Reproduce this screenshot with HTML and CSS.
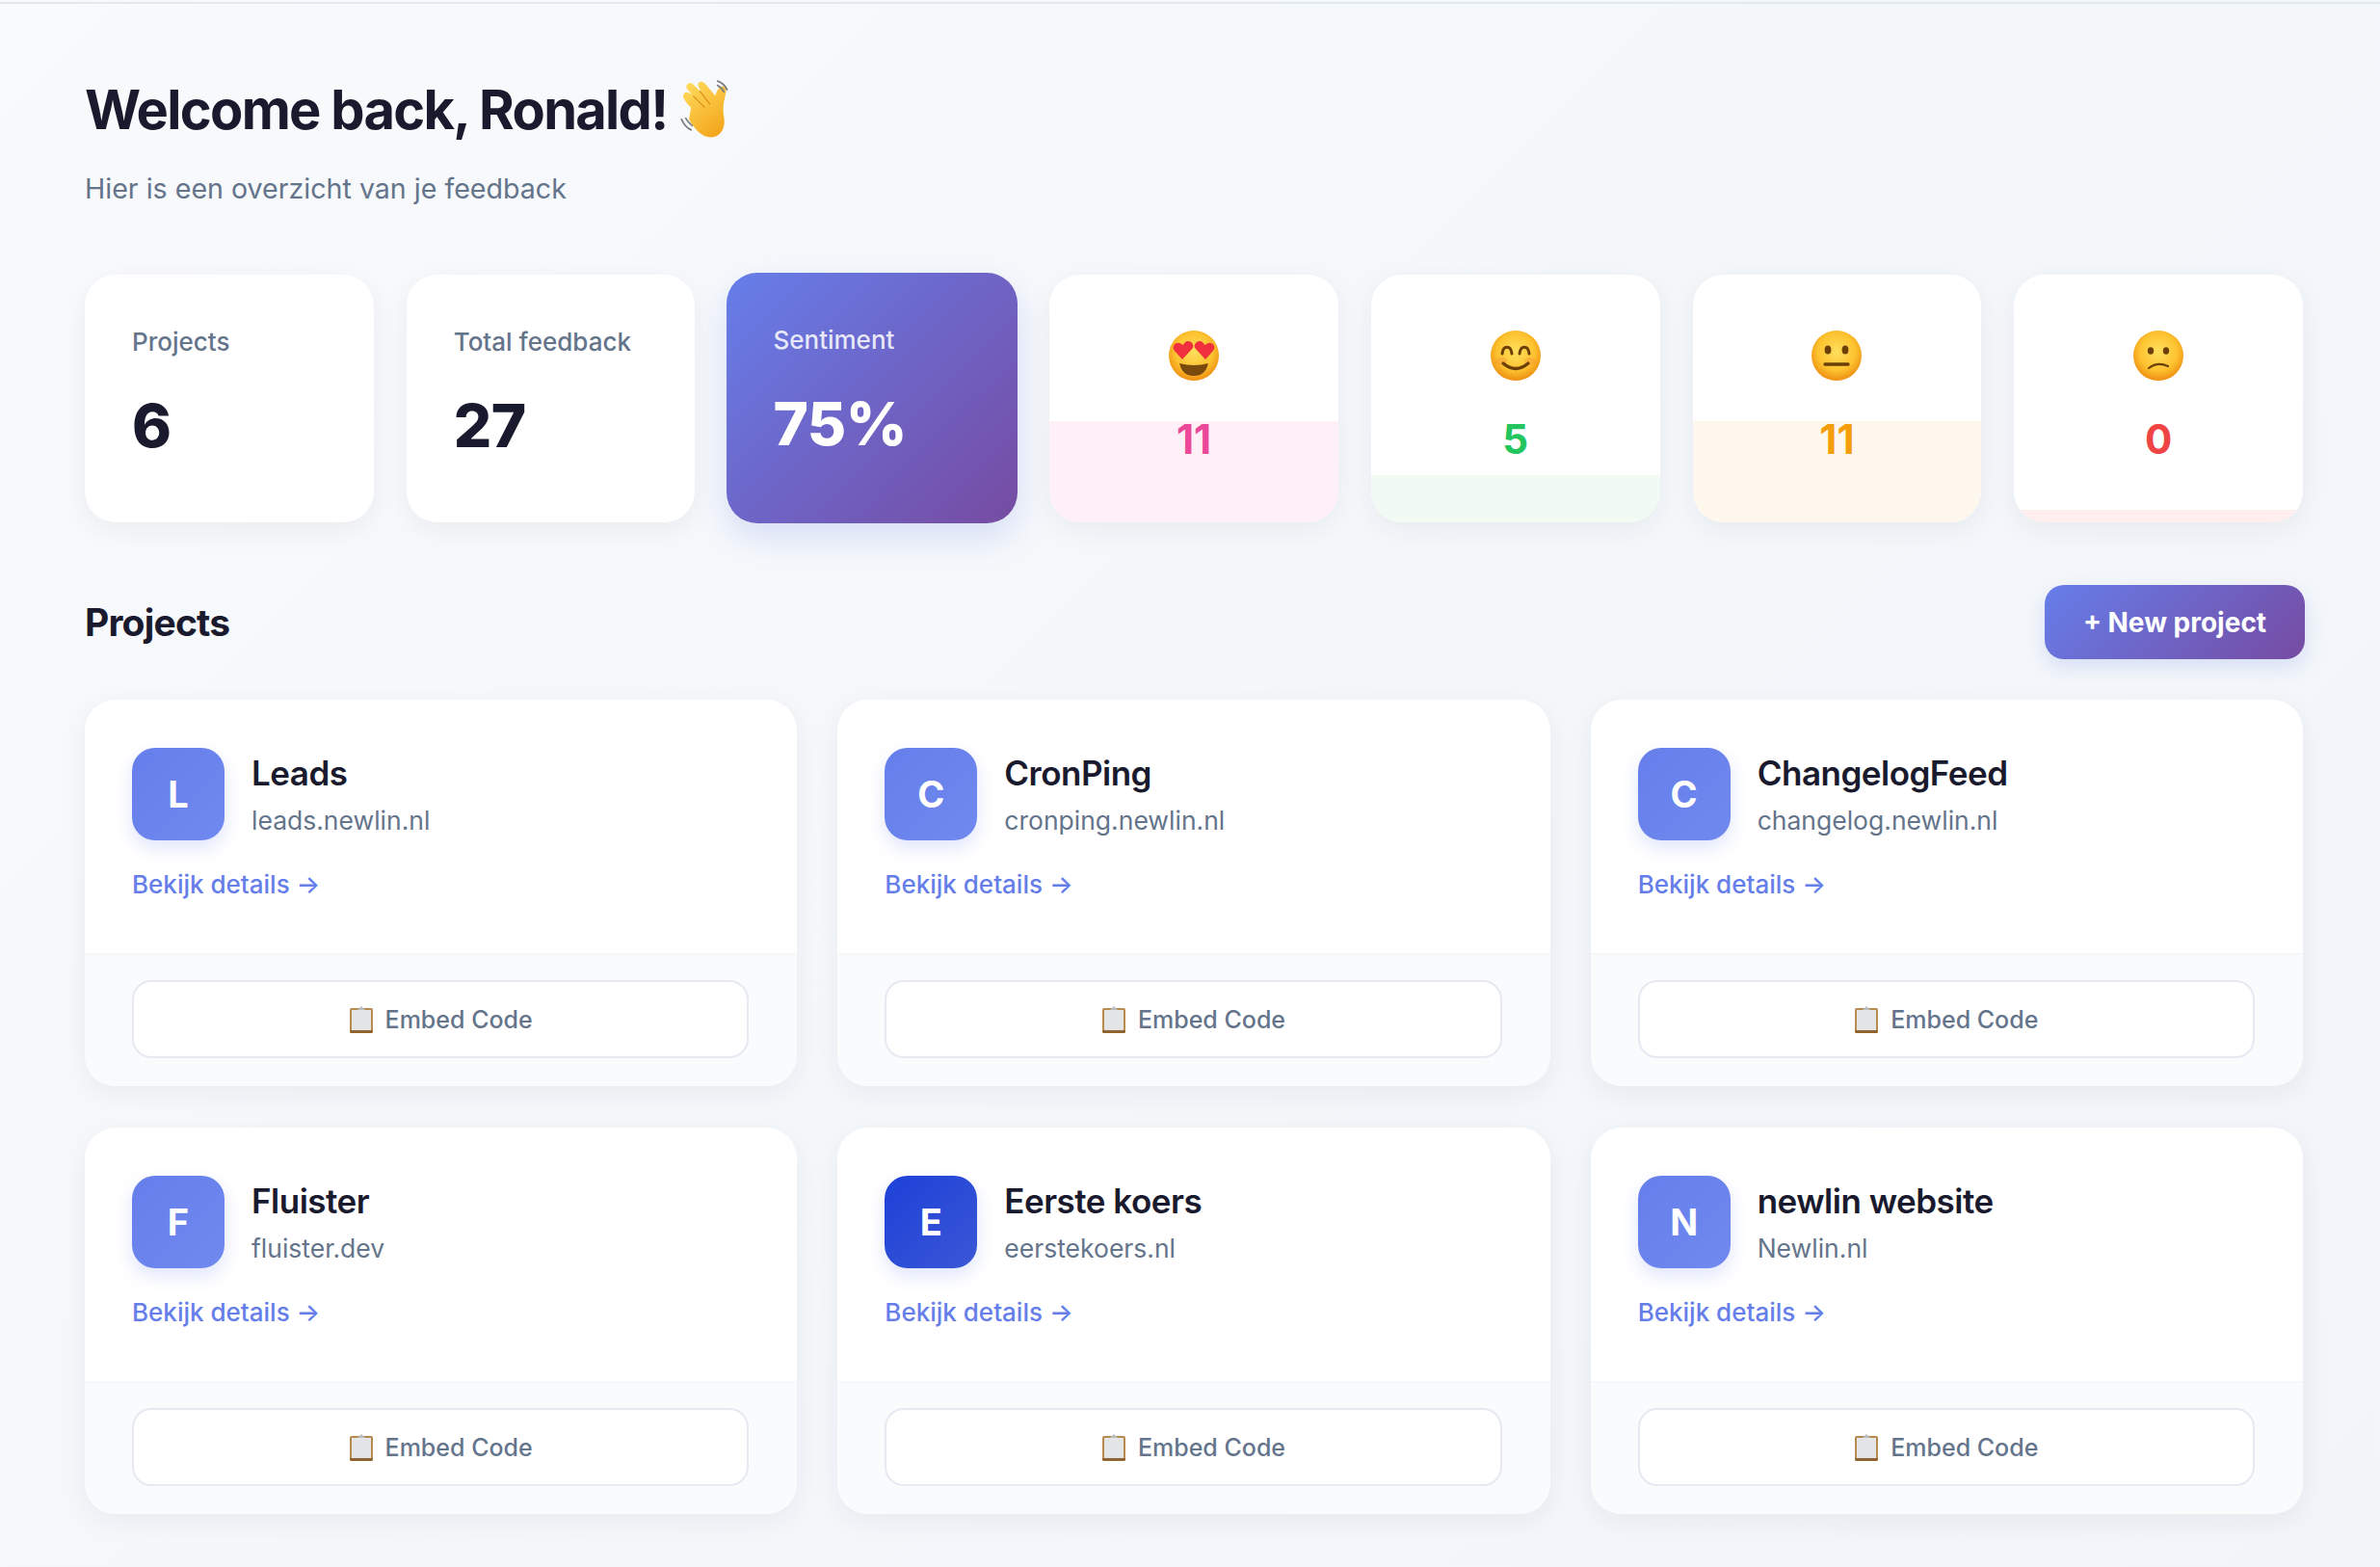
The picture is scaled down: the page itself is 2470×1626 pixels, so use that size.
FILE: index.html
```html
<!DOCTYPE html>
<html lang="en">
<head>
    <meta charset="UTF-8">
    <title>Dashboard</title>
    <link rel="stylesheet" href="styles.css">
</head>
<body>
    <svg class="icon-defs" width="0" height="0" aria-hidden="true">
        <defs>
            <radialGradient id="face" cx="50%" cy="42%" r="58%">
                <stop offset="0" stop-color="#ffdf5e"/>
                <stop offset="0.65" stop-color="#fdc22f"/>
                <stop offset="1" stop-color="#ee8f12"/>
            </radialGradient>
            <linearGradient id="palm" x1="0.2" y1="0" x2="0.8" y2="1">
                <stop offset="0" stop-color="#ffd95a"/>
                <stop offset="1" stop-color="#f3a41a"/>
            </linearGradient>
            <symbol id="emoji-love" viewBox="0 0 54 54">
                <circle cx="27" cy="27" r="26" fill="url(#face)"/>
                <path d="M12 35q15 4 30 0q-3 13-15 13T12 35z" fill="#7a4a0c"/>
                <path d="M15 31L7 22c-4-5 2-11 7-7l2 1 1-2c4-5 11 0 9 5z" fill="#f0303c"/>
                <path d="M39 31l8-9c4-5-2-11-7-7l-2 1-1-2c-4-5-11 0-9 5z" fill="#f0303c"/>
            </symbol>
            <symbol id="emoji-happy" viewBox="0 0 54 54">
                <circle cx="27" cy="27" r="26" fill="url(#face)"/>
                <ellipse cx="12" cy="33" rx="6" ry="4" fill="#f79a3a" opacity=".45"/>
                <ellipse cx="42" cy="33" rx="6" ry="4" fill="#f79a3a" opacity=".45"/>
                <path d="M13 25c1-9 9-9 10 0M31 25c1-9 9-9 10 0" fill="none" stroke="#6b3f08" stroke-width="3" stroke-linecap="round"/>
                <path d="M14 35q13 11 26 0" fill="none" stroke="#6b3f08" stroke-width="3.2" stroke-linecap="round"/>
            </symbol>
            <symbol id="emoji-neutral" viewBox="0 0 54 54">
                <circle cx="27" cy="27" r="26" fill="url(#face)"/>
                <ellipse cx="18" cy="21" rx="3.4" ry="4.6" fill="#6b3f08"/>
                <ellipse cx="36" cy="21" rx="3.4" ry="4.6" fill="#6b3f08"/>
                <path d="M15 36h24" stroke="#6b3f08" stroke-width="3.4" stroke-linecap="round"/>
            </symbol>
            <symbol id="emoji-sad" viewBox="0 0 54 54">
                <circle cx="27" cy="27" r="26" fill="url(#face)"/>
                <ellipse cx="19" cy="22" rx="3.2" ry="3.8" fill="#6b3f08"/>
                <ellipse cx="35" cy="22" rx="3.2" ry="3.8" fill="#6b3f08"/>
                <path d="M17 40q9-7 20-2" fill="none" stroke="#6b3f08" stroke-width="2.2" stroke-linecap="round"/>
            </symbol>
            <symbol id="clipboard" viewBox="0 0 26 30">
                <rect x="1" y="3" width="24" height="26" rx="2" fill="#b98a4e"/>
                <rect x="3" y="5" width="20" height="21" fill="#e4e5e6"/>
                <rect x="1" y="26" width="24" height="3" rx="1.4" fill="#8f6232"/>
                <path d="M9 5l2-2 2-2 2 2 2 2z" fill="#b9bcc0"/>
            </symbol>
        </defs>
    </svg>

    <main class="dashboard">
        <header class="welcome">
            <h1 class="welcome-title">
                Welcome back, Ronald!
                <svg class="wave-hand" viewBox="0 0 60 60">
                    <path d="M12 27c-4-4-9-10-7-13 2-3 6-1 9 2L8 9c-2-4 3-7 6-4l8 8-3-6c-2-4 3-6 6-3l10 12c1-5 4-10 8-9 3 1 2 6 1 10-2 7-2 13-1 19 2 11-4 19-12 19-9 0-16-8-21-17z" fill="url(#palm)"/>
                    <path d="M14 16l11 11M20 11l10 13" stroke="#d98a12" stroke-width="1" fill="none"/>
                    <path d="M3 38q3 7 9 10M7 37q2 4 6 7M37 2q6 2 9 8M37 6q4 2 6 6" stroke="#7c7f84" stroke-width="1.6" stroke-linecap="round" fill="none"/>
                </svg>
            </h1>
            <p class="welcome-sub">Hier is een overzicht van je feedback</p>
        </header>

        <section class="stats">
            <div class="stat-card">
                <div class="stat-label">Projects</div>
                <div class="stat-value">6</div>
            </div>
            <div class="stat-card">
                <div class="stat-label">Total feedback</div>
                <div class="stat-value">27</div>
            </div>
            <div class="stat-card stat-card-accent">
                <div class="stat-label">Sentiment</div>
                <div class="stat-value">75%</div>
            </div>
            <div class="mood-card mood-love">
                <div class="mood-fill" style="height: 41%"></div>
                <svg class="mood-emoji"><use href="#emoji-love"/></svg>
                <div class="mood-count">11</div>
            </div>
            <div class="mood-card mood-happy">
                <div class="mood-fill" style="height: 19%"></div>
                <svg class="mood-emoji"><use href="#emoji-happy"/></svg>
                <div class="mood-count">5</div>
            </div>
            <div class="mood-card mood-neutral">
                <div class="mood-fill" style="height: 41%"></div>
                <svg class="mood-emoji"><use href="#emoji-neutral"/></svg>
                <div class="mood-count">11</div>
            </div>
            <div class="mood-card mood-sad">
                <div class="mood-fill" style="height: 5%"></div>
                <svg class="mood-emoji"><use href="#emoji-sad"/></svg>
                <div class="mood-count">0</div>
            </div>
        </section>

        <section class="section-head">
            <h2 class="section-title">Projects</h2>
            <button class="new-project">+ New project</button>
        </section>

        <section class="project-grid">
            <article class="project-card">
                <div class="project-body">
                    <div class="project-head">
                        <div class="project-logo">L</div>
                        <div>
                            <div class="project-name">Leads</div>
                            <div class="project-domain">leads.newlin.nl</div>
                        </div>
                    </div>
                    <a class="project-link">Bekijk details →</a>
                </div>
                <div class="project-foot">
                    <button class="embed-btn"><svg class="embed-icon"><use href="#clipboard"/></svg>Embed Code</button>
                </div>
            </article>
            <article class="project-card">
                <div class="project-body">
                    <div class="project-head">
                        <div class="project-logo">C</div>
                        <div>
                            <div class="project-name">CronPing</div>
                            <div class="project-domain">cronping.newlin.nl</div>
                        </div>
                    </div>
                    <a class="project-link">Bekijk details →</a>
                </div>
                <div class="project-foot">
                    <button class="embed-btn"><svg class="embed-icon"><use href="#clipboard"/></svg>Embed Code</button>
                </div>
            </article>
            <article class="project-card">
                <div class="project-body">
                    <div class="project-head">
                        <div class="project-logo">C</div>
                        <div>
                            <div class="project-name">ChangelogFeed</div>
                            <div class="project-domain">changelog.newlin.nl</div>
                        </div>
                    </div>
                    <a class="project-link">Bekijk details →</a>
                </div>
                <div class="project-foot">
                    <button class="embed-btn"><svg class="embed-icon"><use href="#clipboard"/></svg>Embed Code</button>
                </div>
            </article>
            <article class="project-card">
                <div class="project-body">
                    <div class="project-head">
                        <div class="project-logo">F</div>
                        <div>
                            <div class="project-name">Fluister</div>
                            <div class="project-domain">fluister.dev</div>
                        </div>
                    </div>
                    <a class="project-link">Bekijk details →</a>
                </div>
                <div class="project-foot">
                    <button class="embed-btn"><svg class="embed-icon"><use href="#clipboard"/></svg>Embed Code</button>
                </div>
            </article>
            <article class="project-card">
                <div class="project-body">
                    <div class="project-head">
                        <div class="project-logo project-logo-dark">E</div>
                        <div>
                            <div class="project-name">Eerste koers</div>
                            <div class="project-domain">eerstekoers.nl</div>
                        </div>
                    </div>
                    <a class="project-link">Bekijk details →</a>
                </div>
                <div class="project-foot">
                    <button class="embed-btn"><svg class="embed-icon"><use href="#clipboard"/></svg>Embed Code</button>
                </div>
            </article>
            <article class="project-card">
                <div class="project-body">
                    <div class="project-head">
                        <div class="project-logo">N</div>
                        <div>
                            <div class="project-name">newlin website</div>
                            <div class="project-domain">Newlin.nl</div>
                        </div>
                    </div>
                    <a class="project-link">Bekijk details →</a>
                </div>
                <div class="project-foot">
                    <button class="embed-btn"><svg class="embed-icon"><use href="#clipboard"/></svg>Embed Code</button>
                </div>
            </article>
        </section>
    </main>
</body>
</html>
```

FILE: styles.css
```css
* {
    margin: 0;
    padding: 0;
    box-sizing: border-box;
}

html, body {
    height: 100%;
}

body {
    font-family: Inter, "Liberation Sans", sans-serif;
    background: linear-gradient(135deg, #f8fafc 0%, #f1f5f9 100%);
    color: #1a1a2e;
    overflow: hidden;
}

.icon-defs {
    position: absolute;
}

.dashboard {
    height: 100%;
    border-top: 2px solid #e2e8f0;
    margin-top: 2px;
    padding: 76px 80px 0 88px;
}

.welcome-title {
    display: flex;
    align-items: center;
    gap: 10px;
    font-size: 56px;
    line-height: 68px;
    font-weight: 700;
    letter-spacing: -1.7px;
}

.wave-hand {
    width: 66px;
    height: 66px;
    margin: 2px 0 0 2px;
}

.welcome-sub {
    margin-top: 28px;
    font-size: 28.6px;
    line-height: 40px;
    color: #64748b;
}

.stats {
    display: grid;
    grid-template-columns: repeat(7, 1fr);
    gap: 34px;
    margin-top: 69px;
}

.stat-card, .mood-card {
    height: 257px;
    background: #fff;
    border-radius: 32px;
    box-shadow: 0 8px 28px rgba(30, 41, 59, 0.06);
}

.stat-card {
    padding: 52px 49px 0;
}

.stat-label {
    font-size: 26px;
    line-height: 36px;
    font-weight: 500;
    color: #64748b;
}

.stat-value {
    margin-top: 31px;
    font-size: 62px;
    line-height: 76px;
    font-weight: 800;
    letter-spacing: -0.5px;
}

.stat-card-accent {
    margin: -2px -1px;
    height: 260px;
    padding-left: 48px;
    background: linear-gradient(135deg, #667eea 0%, #764ba2 100%);
    box-shadow: 0 14px 34px rgba(102, 126, 234, 0.22);
    color: #fff;
}

.stat-card-accent .stat-label {
    color: rgba(255, 255, 255, 0.85);
}

.mood-card {
    position: relative;
    overflow: hidden;
    padding-top: 57px;
    display: flex;
    flex-direction: column;
    align-items: center;
    text-align: center;
}

.mood-fill {
    position: absolute;
    left: 0;
    right: 0;
    bottom: 0;
}

.mood-emoji {
    position: relative;
    width: 54px;
    height: 54px;
}

.mood-count {
    position: relative;
    margin-top: 38px;
    font-size: 42px;
    line-height: 44px;
    font-weight: 700;
}

.mood-love .mood-fill { background: #fef0f6; }
.mood-love .mood-count { color: #ec4899; }
.mood-happy .mood-fill { background: #f1fbf4; }
.mood-happy .mood-count { color: #22c55e; }
.mood-neutral .mood-fill { background: #fef7ed; }
.mood-neutral .mood-count { color: #f59e0b; }
.mood-sad .mood-fill { background: #feeeee; }
.mood-sad .mood-count { color: #ef4444; }

.section-head {
    display: flex;
    align-items: center;
    justify-content: space-between;
    margin-top: 65px;
}

.section-title {
    font-size: 39px;
    line-height: 48px;
    font-weight: 700;
    letter-spacing: -0.8px;
}

.new-project {
    width: 270px;
    height: 77px;
    margin-right: -2px;
    border: none;
    border-radius: 20px;
    background: linear-gradient(135deg, #667eea 0%, #764ba2 100%);
    box-shadow: 0 8px 20px rgba(102, 126, 234, 0.2);
    color: #fff;
    font-family: inherit;
    font-size: 28px;
    font-weight: 700;
}

.project-grid {
    display: grid;
    grid-template-columns: repeat(3, 1fr);
    gap: 43px 42px;
    margin-top: 42px;
}

.project-card {
    background: #fff;
    border-radius: 32px;
    overflow: hidden;
    box-shadow: 0 8px 28px rgba(30, 41, 59, 0.06);
}

.project-body {
    height: 263px;
    padding: 50px 49px 0;
}

.project-head {
    display: flex;
    gap: 28px;
}

.project-logo {
    width: 96px;
    height: 96px;
    flex: none;
    display: flex;
    align-items: center;
    justify-content: center;
    border-radius: 24px;
    background: linear-gradient(135deg, #667eea, #7089ef);
    box-shadow: 0 8px 18px rgba(102, 126, 234, 0.2);
    color: #fff;
    font-size: 38px;
    font-weight: 700;
}

.project-logo-dark {
    background: linear-gradient(135deg, #1d41d8, #3b57d6);
}

.project-name {
    padding-top: 4px;
    font-size: 35px;
    line-height: 44px;
    font-weight: 600;
    letter-spacing: -0.5px;
}

.project-domain {
    margin-top: 7px;
    font-size: 26.5px;
    line-height: 40px;
    color: #64748b;
}

.project-link {
    display: block;
    margin-top: 28px;
    font-size: 26px;
    line-height: 36px;
    font-weight: 500;
    color: #667eea;
}

.project-foot {
    height: 138px;
    padding: 26px 50px 0 49px;
    background: #fafbfd;
    border-top: 2px solid #f5f7fa;
}

.embed-btn {
    width: 100%;
    height: 81px;
    display: flex;
    align-items: center;
    justify-content: center;
    gap: 12px;
    border: 2px solid #e6e9f2;
    border-radius: 20px;
    background: #fff;
    color: #64748b;
    font-family: inherit;
    font-size: 25px;
    font-weight: 500;
}

.embed-icon {
    width: 26px;
    height: 30px;
}
```
